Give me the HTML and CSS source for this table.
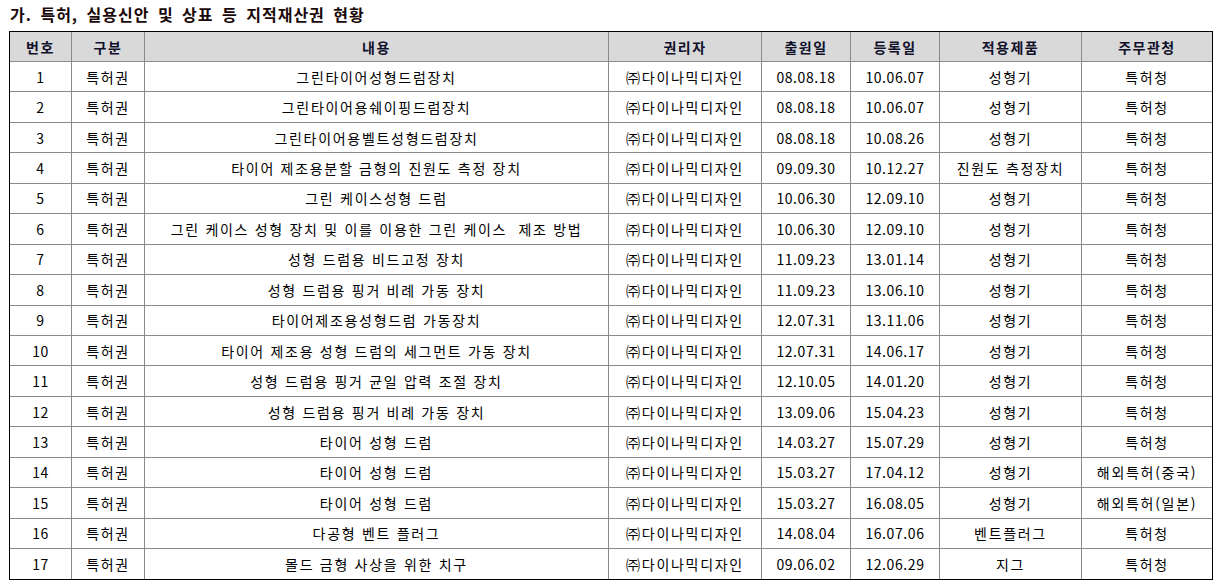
FILE: index.html
```html
<!DOCTYPE html>
<html lang="ko">
<head>
<meta charset="utf-8">
<title>지적재산권 현황</title>
<link rel="stylesheet" href="styles.css">
</head>
<body>
<h1 class="title">가. 특허, 실용신안 및 상표 등 지적재산권 현황</h1>
<table class="ip">
<colgroup>
<col class="c1"><col class="c2"><col class="c3"><col class="c4"><col class="c5"><col class="c6"><col class="c7"><col class="c8">
</colgroup>
<thead>
<tr><th>번호</th><th>구분</th><th>내용</th><th>권리자</th><th>출원일</th><th>등록일</th><th>적용제품</th><th>주무관청</th></tr>
</thead>
<tbody>
<tr><td>1</td><td>특허권</td><td>그린타이어성형드럼장치</td><td>㈜다이나믹디자인</td><td>08.08.18</td><td>10.06.07</td><td>성형기</td><td>특허청</td></tr>
<tr><td>2</td><td>특허권</td><td>그린타이어용쉐이핑드럼장치</td><td>㈜다이나믹디자인</td><td>08.08.18</td><td>10.06.07</td><td>성형기</td><td>특허청</td></tr>
<tr><td>3</td><td>특허권</td><td>그린타이어용벨트성형드럼장치</td><td>㈜다이나믹디자인</td><td>08.08.18</td><td>10.08.26</td><td>성형기</td><td>특허청</td></tr>
<tr><td>4</td><td>특허권</td><td>타이어 제조용분할 금형의 진원도 측정 장치</td><td>㈜다이나믹디자인</td><td>09.09.30</td><td>10.12.27</td><td>진원도 측정장치</td><td>특허청</td></tr>
<tr><td>5</td><td>특허권</td><td>그린 케이스성형 드럼</td><td>㈜다이나믹디자인</td><td>10.06.30</td><td>12.09.10</td><td>성형기</td><td>특허청</td></tr>
<tr><td>6</td><td>특허권</td><td class="pre">그린 케이스 성형 장치 및 이를 이용한 그린 케이스  제조 방법</td><td>㈜다이나믹디자인</td><td>10.06.30</td><td>12.09.10</td><td>성형기</td><td>특허청</td></tr>
<tr><td>7</td><td>특허권</td><td>성형 드럼용 비드고정 장치</td><td>㈜다이나믹디자인</td><td>11.09.23</td><td>13.01.14</td><td>성형기</td><td>특허청</td></tr>
<tr><td>8</td><td>특허권</td><td>성형 드럼용 핑거 비례 가동 장치</td><td>㈜다이나믹디자인</td><td>11.09.23</td><td>13.06.10</td><td>성형기</td><td>특허청</td></tr>
<tr><td>9</td><td>특허권</td><td>타이어제조용성형드럼 가동장치</td><td>㈜다이나믹디자인</td><td>12.07.31</td><td>13.11.06</td><td>성형기</td><td>특허청</td></tr>
<tr><td>10</td><td>특허권</td><td>타이어 제조용 성형 드럼의 세그먼트 가동 장치</td><td>㈜다이나믹디자인</td><td>12.07.31</td><td>14.06.17</td><td>성형기</td><td>특허청</td></tr>
<tr><td>11</td><td>특허권</td><td>성형 드럼용 핑거 균일 압력 조절 장치</td><td>㈜다이나믹디자인</td><td>12.10.05</td><td>14.01.20</td><td>성형기</td><td>특허청</td></tr>
<tr><td>12</td><td>특허권</td><td>성형 드럼용 핑거 비례 가동 장치</td><td>㈜다이나믹디자인</td><td>13.09.06</td><td>15.04.23</td><td>성형기</td><td>특허청</td></tr>
<tr><td>13</td><td>특허권</td><td>타이어 성형 드럼</td><td>㈜다이나믹디자인</td><td>14.03.27</td><td>15.07.29</td><td>성형기</td><td>특허청</td></tr>
<tr><td>14</td><td>특허권</td><td>타이어 성형 드럼</td><td>㈜다이나믹디자인</td><td>15.03.27</td><td>17.04.12</td><td>성형기</td><td>해외특허(중국)</td></tr>
<tr><td>15</td><td>특허권</td><td>타이어 성형 드럼</td><td>㈜다이나믹디자인</td><td>15.03.27</td><td>16.08.05</td><td>성형기</td><td>해외특허(일본)</td></tr>
<tr><td>16</td><td>특허권</td><td>다공형 벤트 플러그</td><td>㈜다이나믹디자인</td><td>14.08.04</td><td>16.07.06</td><td>벤트플러그</td><td>특허청</td></tr>
<tr><td>17</td><td>특허권</td><td>몰드 금형 사상을 위한 치구</td><td>㈜다이나믹디자인</td><td>09.06.02</td><td>12.06.29</td><td>지그</td><td>특허청</td></tr>
</tbody>
</table>
</body>
</html>
```
FILE: styles.css
```css
html, body {
  margin: 0;
  padding: 0;
  background: #fff;
}
body {
  font-family: "Noto Sans CJK KR", "Noto Sans", sans-serif;
  color: #000;
}
.title {
  margin: 0;
  padding-left: 10px;
  height: 31px;
  line-height: 29px;
  font-size: 16px;
  font-weight: bold;
  word-spacing: 3px;
  letter-spacing: 1px;
  color: #1a0808;
  box-sizing: border-box;
}
.ip {
  margin-left: 9px;
  width: 1204px;
  table-layout: fixed;
  border-collapse: separate;
  border-spacing: 0;
  border: 1px solid #000;
  font-size: 14px;
}
.c1 { width: 62px; }
.c2 { width: 73px; }
.c3 { width: 464px; }
.c4 { width: 153px; }
.c5 { width: 89px; }
.c6 { width: 89px; }
.c7 { width: 142px; }
.c8 { width: 130px; }
.ip th, .ip td {
  padding: 0;
  text-align: center;
  vertical-align: middle;
  border-right: 1px solid #8a8a8a;
  border-bottom: 1px solid #8a8a8a;
  white-space: nowrap;
  overflow: hidden;
  box-sizing: border-box;
  line-height: 16px;
}
.ip td {
  letter-spacing: 1.7px;
  word-spacing: 0;
}
.ip td:nth-child(1),
.ip td:nth-child(5),
.ip td:nth-child(6) {
  letter-spacing: 0.6px;
}
.ip th:last-child, .ip td:last-child {
  border-right: none;
}
.ip tbody tr:last-child td {
  border-bottom: none;
}
.ip thead tr {
  height: 30px;
}
.ip th {
  background: #d9d9d9;
  font-weight: bold;
  color: #10102a;
  letter-spacing: 1.5px;
}
.ip tbody tr {
  height: 30.44px;
}
.ip td.pre {
  white-space: pre;
}
```
